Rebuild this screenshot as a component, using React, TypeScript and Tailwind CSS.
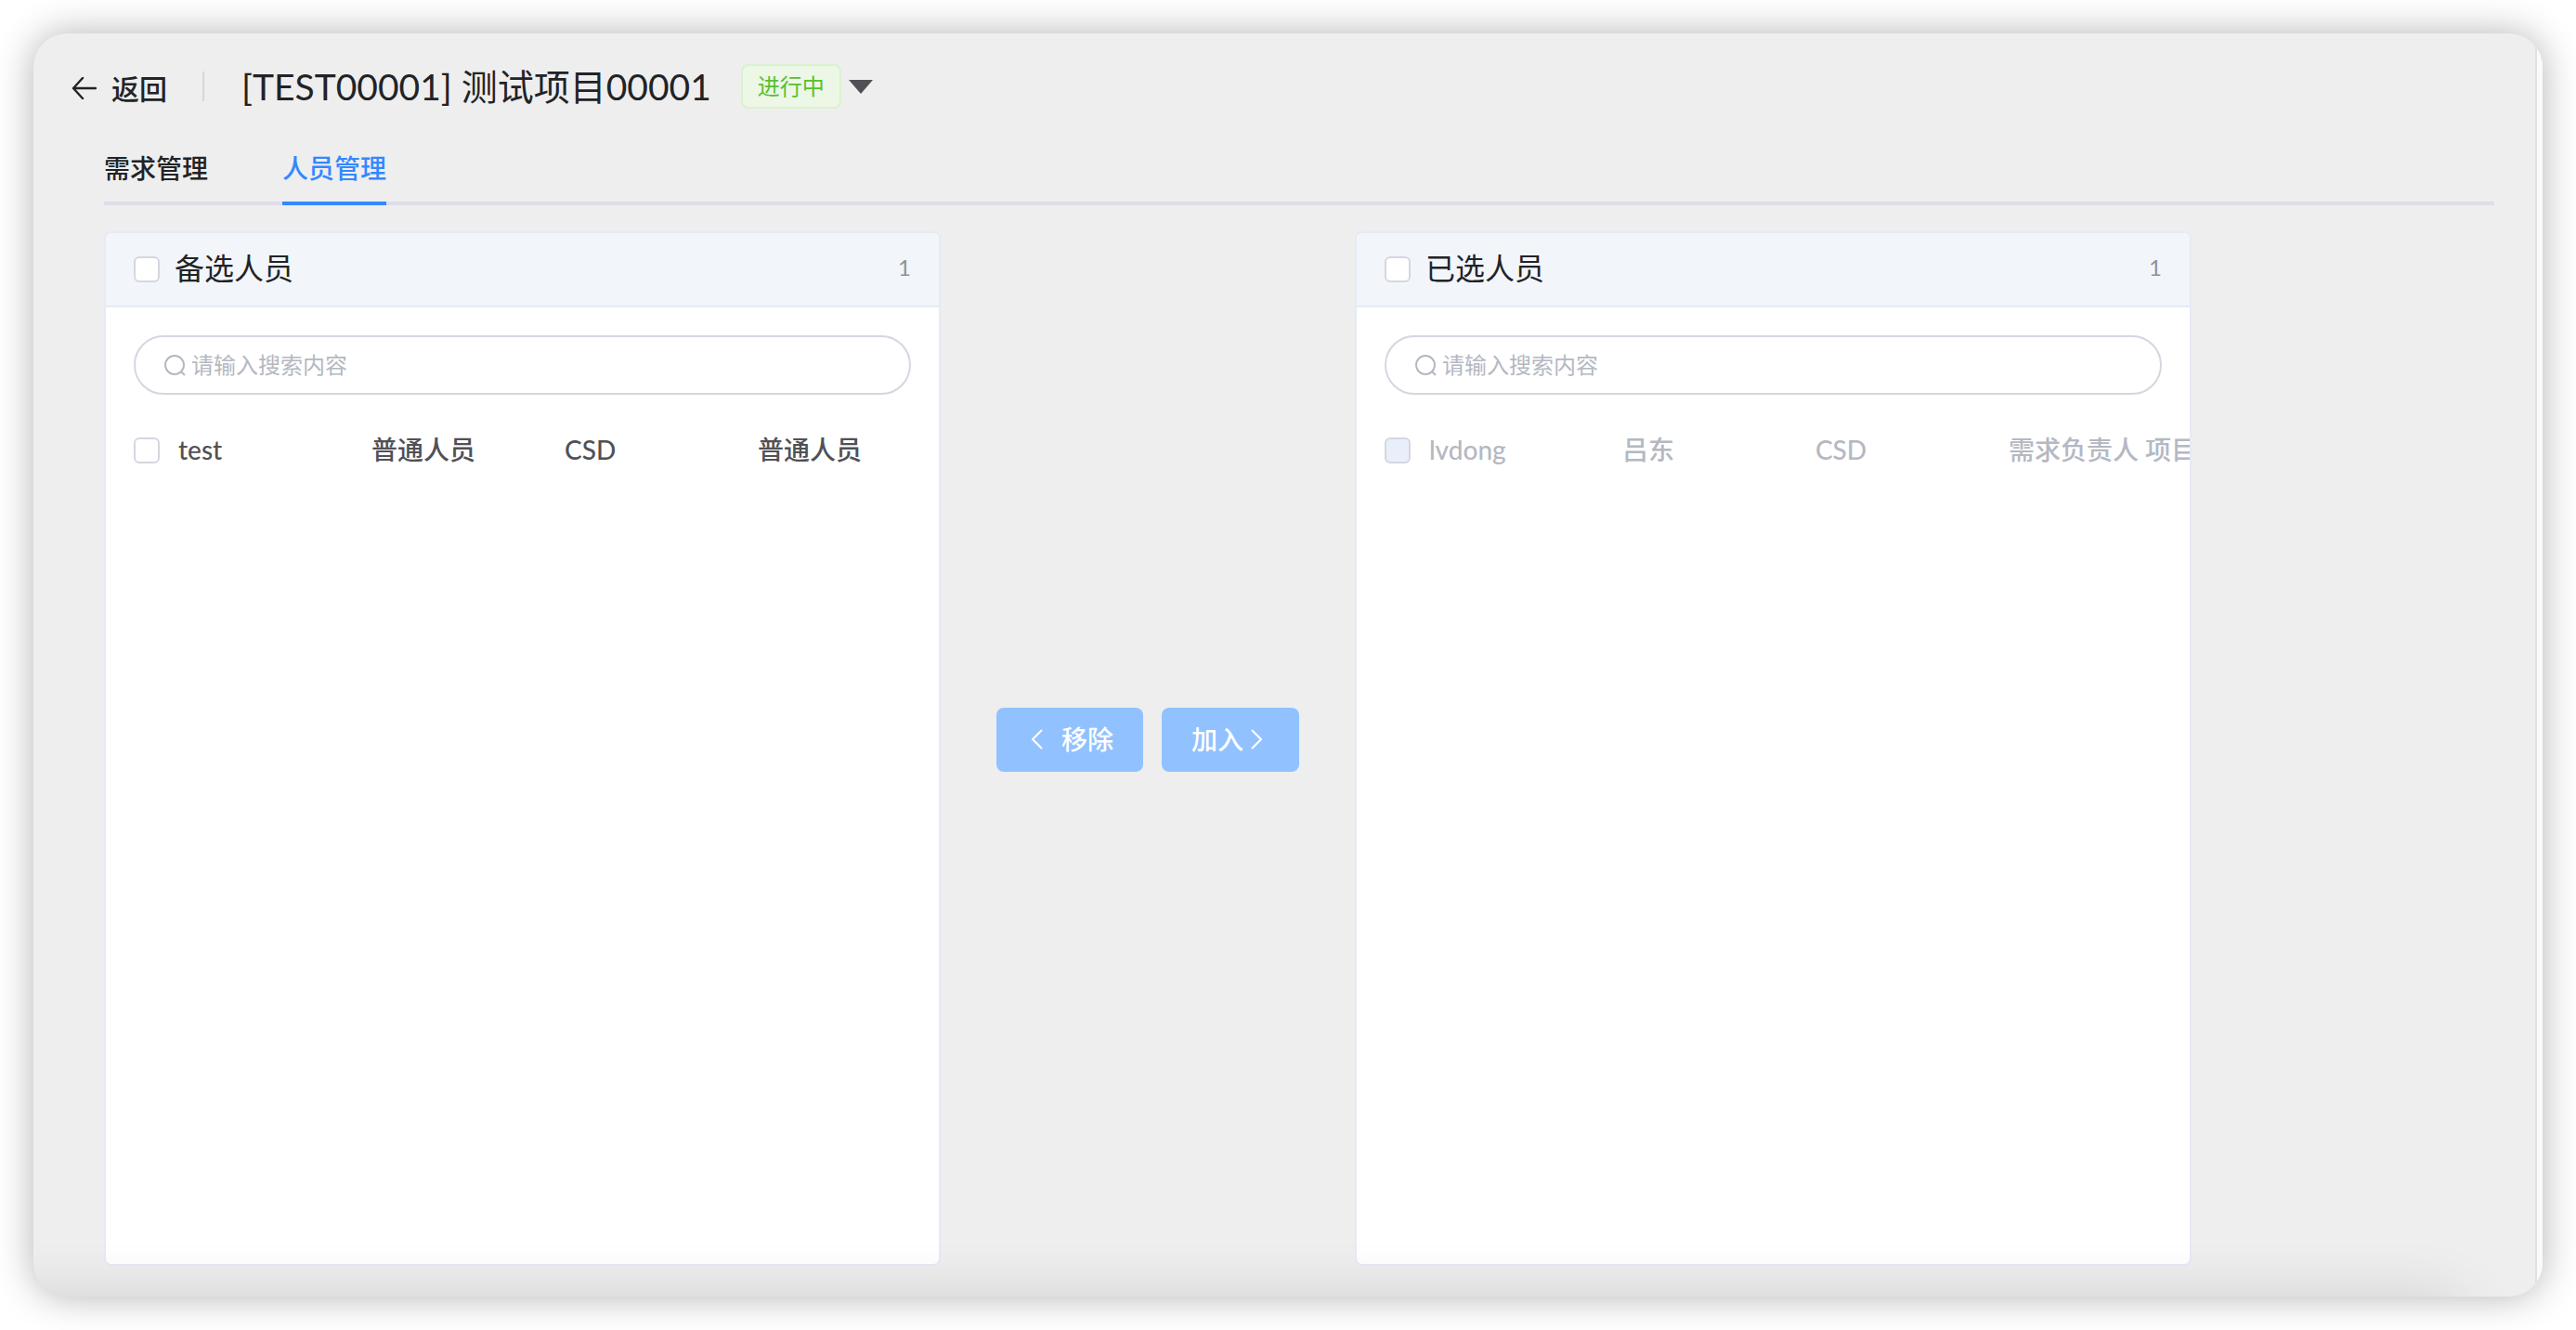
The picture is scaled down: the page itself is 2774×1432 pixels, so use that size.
import { useState } from "react";

type Person = { account: string; name: string; dept: string; role: string; disabled?: boolean };

const candidates: Person[] = [
  { account: "test", name: "普通人员", dept: "CSD", role: "普通人员" },
];

const members: Person[] = [
  { account: "lvdong", name: "吕东", dept: "CSD", role: "需求负责人 项目负责人", disabled: true },
];

const checkboxClass =
  "size-7 shrink-0 appearance-none rounded-md border-2 border-[#d4d7e0] bg-white checked:border-[#3388ff] checked:bg-[#3388ff] disabled:bg-[#e9eefb]";

function SearchIcon() {
  return (
    <svg viewBox="0 0 24 24" className="size-6 shrink-0" fill="none" stroke="#b4b8c2" strokeWidth="2" aria-hidden="true">
      <circle cx="12" cy="12" r="10" />
      <path d="M18.5 18.5L23 23" />
    </svg>
  );
}

function Chevron({ d }: { d: string }) {
  return (
    <svg viewBox="0 0 12 22" className="h-[22px] w-3" fill="none" stroke="currentColor" strokeWidth="2" aria-hidden="true">
      <path d={d} />
    </svg>
  );
}

function TransferPanel({ title, people }: { title: string; people: Person[] }) {
  const [query, setQuery] = useState("");
  const shown = people.filter((p) => (p.account + p.name + p.dept + p.role).includes(query));
  return (
    <section className="flex w-[35%] flex-col overflow-hidden rounded-lg border-2 border-[#e6eaf4] bg-white">
      <header className="flex h-20 shrink-0 items-center justify-between border-b-2 border-[#e6eaf4] bg-[#f2f5fa] px-[30px]">
        <label className="flex items-center gap-4 text-[32px] leading-10 text-[#222326]">
          <input type="checkbox" className={checkboxClass} />
          <span className="pb-0.5">{title}</span>
        </label>
        <span className="pb-1 text-2xl text-[#8e9196]">{people.length}</span>
      </header>
      <label className="mx-[30px] mt-[30px] flex h-16 shrink-0 items-center gap-1.5 rounded-full border-2 border-[#d4d7e0] px-[30px]">
        <SearchIcon />
        <input
          type="text"
          aria-label="搜索"
          placeholder="请输入搜索内容"
          value={query}
          onChange={(e) => setQuery(e.target.value)}
          className="min-w-0 flex-1 bg-transparent text-2xl text-[#505155] outline-none placeholder:text-[#b4b8c2]"
        />
      </label>
      <ul className="mx-[30px] mt-[30px]">
        {shown.map((p) => (
          <li key={p.account}>
            <label
              className={
                p.disabled
                  ? "flex h-[60px] items-center text-[28px] font-medium whitespace-nowrap text-[#b4b8c2]"
                  : "flex h-[60px] items-center text-[28px] font-medium whitespace-nowrap text-[#505155]"
              }
            >
              <input type="checkbox" disabled={p.disabled} className={checkboxClass} />
              <span className="ml-5 w-52 shrink-0 pb-0.5">{p.account}</span>
              <span className="w-52 shrink-0 pb-0.5">{p.name}</span>
              <span className="w-52 shrink-0 pb-0.5">{p.dept}</span>
              <span className="w-52 shrink-0 pb-0.5">{p.role}</span>
            </label>
          </li>
        ))}
      </ul>
    </section>
  );
}

export default function App() {
  return (
    <div className="flex min-h-screen bg-white p-9 font-['Lato','Noto_Sans_CJK_SC',sans-serif]">
      <div className="relative flex flex-1 overflow-hidden rounded-[36px] bg-[#eeeeee] shadow-[0_0_40px_rgba(0,0,0,0.3)]">
        <main className="flex min-w-0 flex-1 flex-col pb-[33px]">
          <header className="flex h-[114px] items-center pl-10 text-[#222326]">
            <button type="button" className="flex items-center gap-4 pt-1 text-[30px] font-medium">
              <svg viewBox="0 0 28 24" className="h-6 w-7" fill="none" stroke="currentColor" strokeWidth="2.4" strokeLinecap="round" strokeLinejoin="round" aria-hidden="true">
                <path d="M27 12H3M13 1L3 12L13 23" />
              </svg>
              返回
            </button>
            <span className="mr-10 ml-[38px] h-8 w-0.5 bg-[#d4d7e0]" />
            <h1 className="text-[39px]">[TEST00001] 测试项目00001</h1>
            <button type="button" aria-label="更改状态" className="ml-8 flex items-center gap-2">
              <span className="flex h-12 items-center rounded-lg border-2 border-[#daf2cf] bg-[#ecf7e6] px-4 text-2xl text-[#5abf2e]">
                进行中
              </span>
              <svg viewBox="0 0 26 15" className="h-[15px] w-[26px]" fill="#505155" aria-hidden="true">
                <path d="M0 0H26L13 15Z" />
              </svg>
            </button>
          </header>
          <nav className="mr-11 ml-[76px] flex gap-20 border-b-4 border-[#dcdfe8] text-[28px] font-medium">
            <a href="#requirements" className="-mb-1 h-[71px] border-b-4 border-transparent pt-2.5 text-[#222326]">需求管理</a>
            <a href="#people" aria-current="page" className="-mb-1 h-[71px] border-b-4 border-[#3388ff] pt-2.5 text-[#3388ff]">人员管理</a>
          </nav>
          <div className="mt-7 mr-11 ml-[76px] flex flex-1">
            <TransferPanel title="备选人员" people={candidates} />
            <div className="flex items-center gap-5 px-[60px] pb-5 text-[28px] font-medium whitespace-nowrap text-white">
              <button type="button" disabled className="flex h-[69px] items-center gap-5 rounded-lg bg-[#91c2ff] pr-8 pl-[38px]">
                <Chevron d="M11 1L1 11L11 21" />
                移除
              </button>
              <button type="button" disabled className="flex h-[69px] items-center gap-2 rounded-lg bg-[#91c2ff] pr-10 pl-8">
                加入
                <Chevron d="M1 1L11 11L1 21" />
              </button>
            </div>
            <TransferPanel title="已选人员" people={members} />
          </div>
        </main>
        <div className="w-2 shrink-0 border-l-2 border-[#e0e0e0] bg-[#fafafa]" />
        <div className="pointer-events-none absolute top-full right-[90px] -left-20 h-16 shadow-[0_0_64px_rgba(0,0,0,0.12)]" />
      </div>
    </div>
  );
}
